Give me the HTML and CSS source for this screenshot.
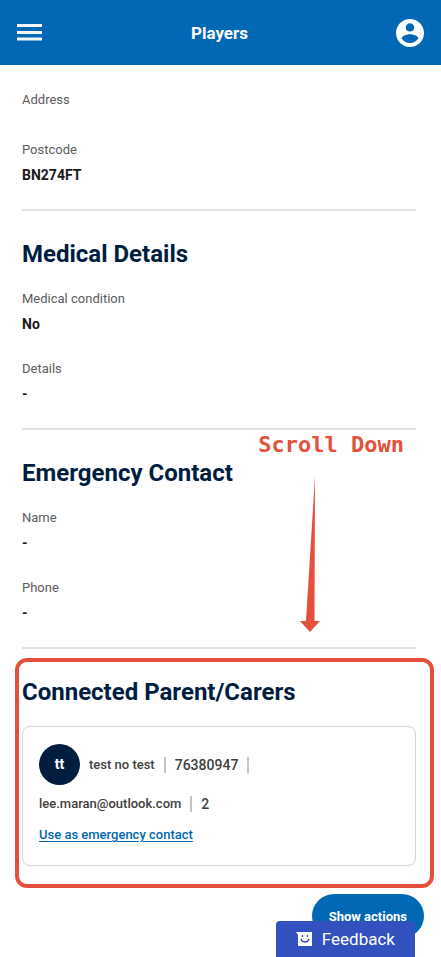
FILE: index.html
```html
<!DOCTYPE html>
<html lang="en">

<head>
    <meta charset="utf-8">
    <meta name="viewport" content="width=device-width, initial-scale=1">
    <title>Players</title>
    <link rel="stylesheet" href="styles.css">
</head>

<body>
    <header class="topbar">
        <button class="icon-btn" aria-label="Menu">
            <svg width="26" height="20" viewBox="0 0 26 20" fill="#f4f8fc">
                <rect x="0" y="1" width="25" height="3" />
                <rect x="0" y="8" width="25" height="3" />
                <rect x="0" y="14.500" width="25" height="3" />
            </svg>
        </button>
        <h1 class="topbar-title">Players</h1>
        <button class="icon-btn" aria-label="Account">
            <svg width="28" height="28" viewBox="2 2 20 20" fill="#fff">
                <path d="M12 2C6.48 2 2 6.48 2 12s4.48 10 10 10 10-4.480 10-10S17.520 2 12 2zm0 3c1.660 0 3 1.340 3 3s-1.340 3-3 3-3-1.340-3-3 1.340-3 3-3zm0 14.200c-2.500 0-4.710-1.280-6-3.220.03-1.990 4-3.080 6-3.080 1.990 0 5.970 1.090 6 3.080-1.290 1.940-3.500 3.220-6 3.220z" />
            </svg>
        </button>
    </header>

    <main class="content">
        <section class="section">
            <dl class="fields">
                <div class="field">
                    <dt>Address</dt>
                </div>
                <div class="field">
                    <dt>Postcode</dt>
                    <dd>BN274FT</dd>
                </div>
            </dl>
        </section>

        <section class="section">
            <h2>Medical Details</h2>
            <dl class="fields">
                <div class="field">
                    <dt>Medical condition</dt>
                    <dd>No</dd>
                </div>
                <div class="field">
                    <dt>Details</dt>
                    <dd>-</dd>
                </div>
            </dl>
        </section>

        <section class="section">
            <h2>Emergency Contact</h2>
            <dl class="fields">
                <div class="field">
                    <dt>Name</dt>
                    <dd>-</dd>
                </div>
                <div class="field">
                    <dt>Phone</dt>
                    <dd>-</dd>
                </div>
            </dl>
            <div class="callout">
                <span>Scroll Down</span>
                <svg width="20" height="156" viewBox="0 0 20 156" fill="#e4503c">
                    <path d="M15 0L14.500 145H20L10 156L0 145H6Z" />
                </svg>
            </div>
        </section>

        <section class="section">
            <h2>Connected Parent/Carers</h2>
            <div class="card">
                <div class="card-row">
                    <span class="avatar">tt</span>
                    <span>test no test</span>
                    <span class="divider"></span>
                    <span class="number">76380947</span>
                    <span class="divider"></span>
                </div>
                <div class="card-row">
                    <span>lee.maran@outlook.com</span>
                    <span class="divider"></span>
                    <span class="number">2</span>
                </div>
                <a class="link" href="#">Use as emergency contact</a>
            </div>
            <div class="highlight"></div>
        </section>
    </main>

    <button class="actions-btn">Show actions</button>
    <button class="feedback-btn">
        <svg width="16" height="16" viewBox="0 0 16 16">
            <path d="M0 1H16V15H2V4Z" fill="#fff" />
            <path d="M6.500 4v2M11.500 4v2M5 8c1 4 7 4 8 0" fill="none" stroke="#3350bf" stroke-width="1.300" />
        </svg>
        Feedback
    </button>
</body>

</html>
```

FILE: styles.css
```css
* {
    box-sizing: border-box;
}

body {
    margin: 0;
    background: #fff;
    color: #1a1a1a;
    font-family: Roboto, "Liberation Sans", sans-serif;
    font-size: 13px;
}

button {
    font-family: inherit;
    border: none;
    cursor: pointer;
}

.topbar {
    display: flex;
    align-items: center;
    justify-content: space-between;
    height: 65px;
    padding: 0 17px;
    background: #0068b4;
    color: #fff;
}

.topbar-title {
    margin: 0;
    font-size: 17px;
    font-weight: bold;
}

.icon-btn {
    display: flex;
    padding: 0;
    background: none;
}

.content {
    padding: 0 25px 24px 22px;
}

.section {
    position: relative;
    padding: 27px 0 24px;
    border-bottom: 2px solid #e2e2e2;
}

.section:first-child {
    padding-top: 24px;
}

.section:last-child {
    padding-bottom: 0;
    border-bottom: none;
}

h2 {
    margin: 0 0 18px;
    color: #011e41;
    font-size: 24px;
    line-height: 32px;
}

.fields {
    display: flex;
    flex-direction: column;
    gap: 24px;
    margin: 0;
}

.field dt {
    margin-bottom: 4px;
    color: #5c5c5c;
    line-height: 22px;
}

.field dd {
    margin: 0;
    font-size: 14px;
    font-weight: bold;
    line-height: 20px;
}

.card {
    padding: 17px 16px 18px;
    border: 1px solid #d4d4d4;
    border-radius: 8px;
    color: #404040;
    font-weight: 500;
}

.card-row {
    display: flex;
    align-items: center;
    gap: 9px;
    margin-bottom: 7px;
    line-height: 24px;
}

.avatar {
    width: 41px;
    height: 41px;
    border-radius: 50%;
    background: #011e41;
    color: #fff;
    font-size: 14px;
    font-weight: bold;
    line-height: 41px;
    text-align: center;
}

.number {
    font-size: 14px;
}

.divider {
    width: 2px;
    height: 16px;
    background: #c4c4c4;
}

.link {
    color: #0068b4;
    line-height: 24px;
    text-underline-offset: 2px;
}

/* annotations over the page */
.callout {
    position: absolute;
    top: 0;
    right: 12px;
    display: flex;
    flex-direction: column;
    align-items: center;
    gap: 16px;
    color: #e4503c;
    font-family: "DejaVu Sans Mono", monospace;
    font-size: 22px;
    font-weight: bold;
    line-height: 30px;
}

.callout svg {
    margin-right: 42px;
}

.highlight {
    position: absolute;
    inset: 9px -18px -22px -7px;
    border: 4px solid #e4503c;
    border-radius: 12px;
    pointer-events: none;
}

.actions-btn {
    position: fixed;
    right: 17px;
    bottom: 19px;
    height: 44px;
    padding: 0 17px;
    border-radius: 22px;
    background: #0068b4;
    color: #fff;
    font-size: 13px;
    font-weight: bold;
}

.feedback-btn {
    position: fixed;
    right: 26px;
    bottom: 0;
    display: flex;
    align-items: center;
    gap: 10px;
    height: 36px;
    padding: 0 20px;
    border-radius: 4px 4px 0 0;
    background: #3350bf;
    color: #fff;
    font-size: 17px;
}
```
